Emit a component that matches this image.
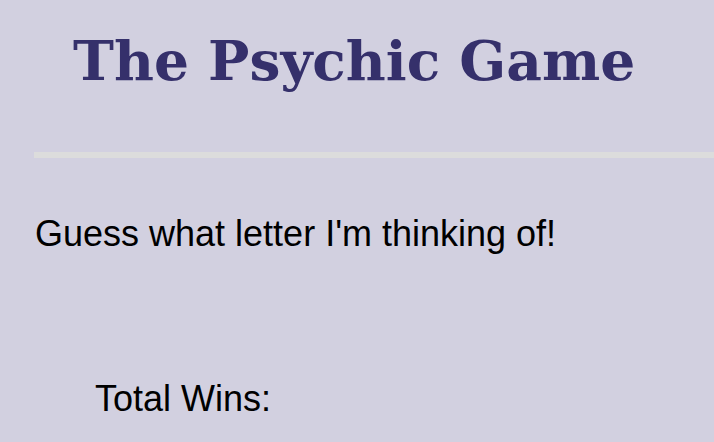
export default function App() {
  return (
    <div className="min-h-screen w-full overflow-hidden bg-[#d2d0e0]">
      <div className="pl-[34px]">
        <h1 className="h-[152px] pl-[39px] pt-[21px] font-['DejaVu_Serif',Georgia,serif] text-[55px] leading-[80px] font-bold whitespace-nowrap text-[#35306b]">
          The Psychic Game
        </h1>
        <div className="h-[6px] w-[700px] bg-[#dcdcdc]" />
        <p className="mt-[54px] pl-px font-['Liberation_Sans',Arial,sans-serif] text-[36px] leading-[44px] text-black">
          Guess what letter I'm thinking of!
        </p>
        <p className="mt-[121px] pl-[61px] font-['Liberation_Sans',Arial,sans-serif] text-[36px] leading-[44px] text-black">
          Total Wins:
        </p>
      </div>
    </div>
  );
}
